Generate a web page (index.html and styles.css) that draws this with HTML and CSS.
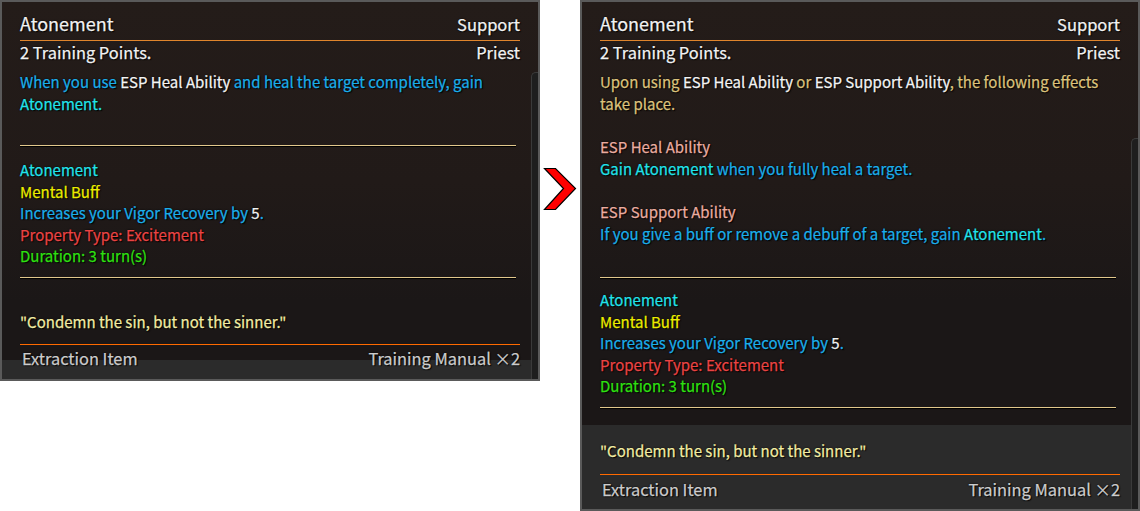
FILE: index.html
```html
<!DOCTYPE html>
<html>
<head>
<meta charset="utf-8">
<link rel="stylesheet" href="styles.css">
</head>
<body>
<div class="stage">
  <div class="panel panel-left">
    <div class="content">
      <div class="head-row">
        <span class="title">Atonement</span>
        <span class="category">Support</span>
      </div>
      <div class="sub-row">
        <span>2 Training Points.</span>
        <span>Priest</span>
      </div>
      <p class="desc blue">When you use <span class="white">ESP Heal Ability</span> and heal the target completely, gain <span class="cyan">Atonement.</span></p>
      <div class="divider d1"></div>
      <div class="effect e1">
        <div class="cyan">Atonement</div>
        <div class="yellow">Mental Buff</div>
        <div class="blue">Increases your Vigor Recovery by <span class="white">5</span>.</div>
        <div class="red">Property Type: Excitement</div>
        <div class="green">Duration: 3 turn(s)</div>
      </div>
      <div class="divider d2"></div>
      <div class="quote q1">"Condemn the sin, but not the sinner."</div>
      <div class="orange-line o1"></div>
      <div class="footer f1">
        <span>Extraction Item</span>
        <span>Training Manual ×2</span>
      </div>
    </div>
    <div class="scrollbar sb1"></div>
  </div>

  <div class="arrow">
    <svg width="34" height="44" viewBox="0 0 34 44">
      <polygon points="1.5,1.5 12.5,1.5 32.5,21.5 12.5,42.5 1.5,42.5 20.5,21.5" fill="#ff0000" stroke="#000" stroke-width="1.2" stroke-linejoin="miter"/>
    </svg>
  </div>

  <div class="panel panel-right">
    <div class="content">
      <div class="head-row">
        <span class="title">Atonement</span>
        <span class="category">Support</span>
      </div>
      <div class="sub-row">
        <span>2 Training Points.</span>
        <span>Priest</span>
      </div>
      <p class="desc tan">Upon using <span class="white">ESP Heal Ability</span> or <span class="white">ESP Support Ability</span>, the following effects take place.</p>
      <div class="ability a1">
        <div class="pink">ESP Heal Ability</div>
        <div class="blue"><span class="cyan">Gain Atonement</span> when you fully heal a target.</div>
      </div>
      <div class="ability a2">
        <div class="pink">ESP Support Ability</div>
        <div class="blue">If you give a buff or remove a debuff of a target, gain <span class="cyan">Atonement</span>.</div>
      </div>
      <div class="divider d3"></div>
      <div class="effect e2">
        <div class="cyan">Atonement</div>
        <div class="yellow">Mental Buff</div>
        <div class="blue">Increases your Vigor Recovery by <span class="white">5</span>.</div>
        <div class="red">Property Type: Excitement</div>
        <div class="green">Duration: 3 turn(s)</div>
      </div>
      <div class="divider d4"></div>
      <div class="foot-section">
        <div class="quote q2">"Condemn the sin, but not the sinner."</div>
        <div class="orange-line o2"></div>
        <div class="footer f2">
          <span>Extraction Item</span>
          <span>Training Manual ×2</span>
        </div>
      </div>
    </div>
    <div class="scrollbar sb2"></div>
  </div>
</div>
</body>
</html>
```
FILE: styles.css
```css
html, body {
  margin: 0;
  padding: 0;
  background: #ffffff;
}

.stage {
  display: flex;
  align-items: flex-start;
  width: 1140px;
  height: 511px;
  font-family: "Noto Sans CJK SC", "Noto Sans", sans-serif;
  font-size: 15px;
  color: #f2f2f2;
  text-shadow: 1px 1px 1px #000, 0 0 2px #000;
  -webkit-text-stroke: 0.25px currentColor;
}

.panel {
  position: relative;
  box-sizing: border-box;
  border: 2px solid #5a5a5a;
  background: linear-gradient(to bottom, #241c19 0, #211a18 180px, #1b1717 300px, #1b1717 100%);
  display: flex;
}

.panel-left {
  width: 540px;
  height: 381px;
}

.panel-right {
  width: 560px;
  height: 511px;
  margin-left: 40px;
}

.content {
  flex: 1;
  display: flex;
  flex-direction: column;
  padding: 0 0 0 18px;
  margin-right: 18px;
}

.head-row {
  display: flex;
  justify-content: space-between;
  align-items: baseline;
  padding: 8px 0 3px 0;
  border-bottom: 1px solid #e0852c;
}

.title {
  font-size: 18px;
  line-height: 26px;
}

.category {
  font-size: 16.5px;
  line-height: 26px;
}

.sub-row {
  display: flex;
  justify-content: space-between;
  font-size: 16.4px;
  line-height: 22px;
}

.desc {
  margin: 8px 0 0 0;
  line-height: 22px;
}

.divider {
  height: 1px;
  background: #e2c88c;
  margin-right: 4px;
  box-shadow: 0 1px 0 #000;
}

.d1 { margin-top: 30px; }
.d2 { margin-top: 10px; }
.d3 { margin-top: 32px; }
.d4 { margin-top: 10px; }

.effect {
  line-height: 21.6px;
}
.e1 { margin-top: 13px; }
.e2 { margin-top: 11px; }

.ability {
  line-height: 22px;
}
.a1 { margin-top: 21px; }
.a2 { margin-top: 21px; }

.quote {
  color: #f2eca4;
  line-height: 22px;
}
.q1 { margin-top: 33px; }

.orange-line {
  height: 1px;
  background: #ff6a00;
}
.o1 { margin-top: 11px; }
.o2 { margin-top: 12px; }

.footer {
  display: flex;
  justify-content: space-between;
  font-size: 16.4px;
  line-height: 22px;
  color: #cccccc;
  padding: 0 0 0 2px;
}

.f1 {
  margin-top: 2px;
  margin-left: -18px;
  padding-left: 20px;
  margin-right: -11px;
  padding-right: 11px;
  background: linear-gradient(to bottom, transparent 13px, #2b2b2b 13px);
  height: 32px;
}

.f2 {
  margin-top: 3px;
}

.foot-section {
  margin-top: 17px;
  margin-left: -18px;
  margin-right: -11px;
  padding: 15px 11px 0 18px;
  background: #2b2b2b;
  flex: 1;
}

.scrollbar {
  position: absolute;
  right: 0;
  bottom: 0;
  width: 6px;
  background: #1e1e1e;
  border: 1px solid #3a3a3a;
  border-right: none;
  border-bottom: none;
  border-radius: 5px 0 0 0;
}
.sb1 { top: 70px; }
.sb2 { top: 136px; }

.arrow {
  position: absolute;
  left: 543px;
  top: 167px;
}

.white { color: #f4f4f4; }
.blue { color: #1caeea; }
.cyan { color: #22e2ea; }
.tan { color: #dcc27c; }
.pink { color: #eaaca0; }
.yellow { color: #ecec00; }
.red { color: #ea4444; }
.green { color: #30e012; }
```
